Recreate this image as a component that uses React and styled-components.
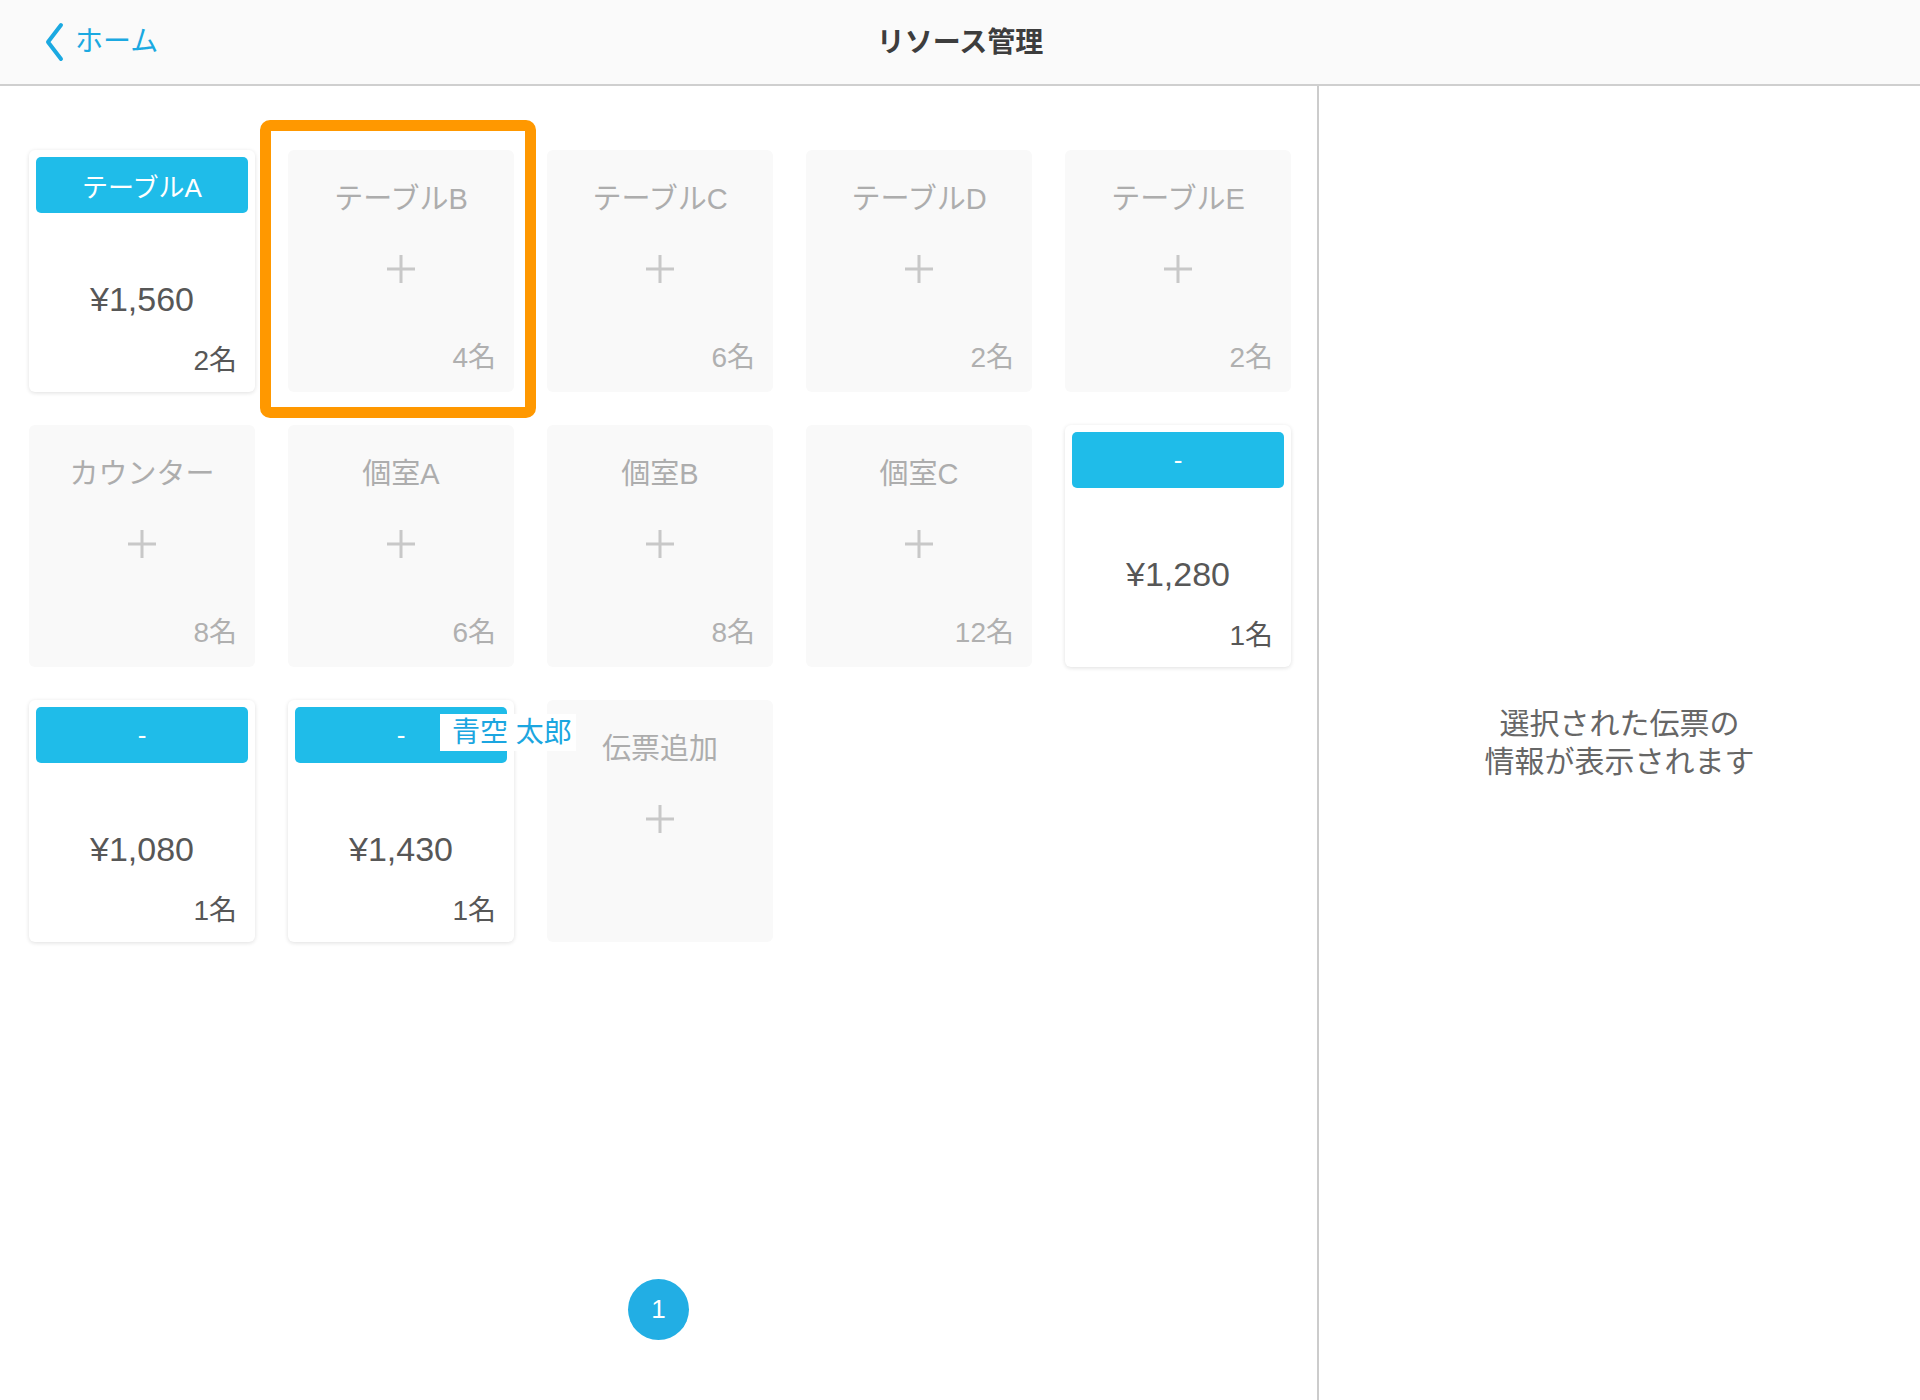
import React from 'react';
import styled, { createGlobalStyle } from 'styled-components';

const GlobalStyle = createGlobalStyle`
	body {
		margin: 0;
		background: #ffffff;
		font-family: "Liberation Sans", "Noto Sans CJK JP", sans-serif;
	}`;

const Page = styled.div`
	width: 1920px;
	min-height: 1400px;
	display: flex;
	flex-direction: column;`;

const Header = styled.header`
	height: 84px;
	background: #fafafa;
	border-bottom: 2px solid #cfcfcf;
	display: grid;
	grid-template-columns: 1fr auto 1fr;
	align-items: center;`;

const Back = styled.a`
	display: flex;
	align-items: center;
	gap: 10px;
	padding-left: 43px;
	color: #1ba9e1;
	font-size: 28px;
	line-height: 1;
	text-decoration: none;`;

const Title = styled.h1`
	margin: 0 0 5px;
	font-size: 28px;
	font-weight: 700;
	color: #3d3d3d;`;

const Main = styled.main`
	flex: 1;
	display: flex;`;

const LeftPanel = styled.section`
	width: 1317px;
	border-right: 2px solid #cccccc;
	display: flex;
	flex-direction: column;`;

const Grid = styled.div`
	display: grid;
	grid-template-columns: repeat(5, 226px);
	grid-auto-rows: 242px;
	gap: 33px;
	padding: 64px 29px 0;`;

const Slot = styled.div`
	position: relative;`;

const Card = styled.div`
	height: 100%;
	box-sizing: border-box;
	border-radius: 6px;
	display: flex;
	flex-direction: column;
	background: ${p => (p.$active ? '#ffffff' : '#f9f9f9')};
	box-shadow: ${p => (p.$active ? '0 1px 4px rgba(0, 0, 0, 0.13)' : 'none')};
	padding: ${p => (p.$active ? '7px 7px 0' : '0')};`;

const CardHead = styled.div`
	height: 56px;
	border-radius: 5px;
	background: #1fbce9;
	color: #ffffff;
	font-size: 26px;
	display: flex;
	align-items: center;
	justify-content: center;`;

const Price = styled.div`
	margin-top: 66px;
	line-height: 40px;
	font-size: 34px;
	color: #575757;
	text-align: center;`;

const Count = styled.div`
	margin-top: ${p => p.$top}px;
	padding-right: ${p => (p.$active ? '11px' : '18px')};
	line-height: 32px;
	font-size: 28px;
	text-align: right;
	color: ${p => (p.$active ? '#575757' : '#b0b0b0')};`;

const Name = styled.div`
	margin-top: 29px;
	line-height: 40px;
	font-size: 29px;
	color: #adadad;
	text-align: center;`;

const PlusWrap = styled.div`
	margin-top: 34px;
	height: 32px;
	display: flex;
	justify-content: center;`;

const Highlight = styled.div`
	position: absolute;
	top: -30px;
	left: -28px;
	right: -22px;
	bottom: -26px;
	border: 11px solid #ff9800;
	border-radius: 10px;
	pointer-events: none;`;

const NameTag = styled.span`
	position: absolute;
	top: 14px;
	left: 152px;
	z-index: 2;
	height: 37px;
	padding: 0 4px 0 12px;
	background: #ffffff;
	color: #1ba6e0;
	font-size: 28px;
	line-height: 37px;
	white-space: nowrap;`;

const Pager = styled.div`
	margin-top: auto;
	margin-bottom: 60px;
	display: flex;
	justify-content: center;`;

const PageDot = styled.div`
	width: 61px;
	height: 61px;
	border-radius: 50%;
	background: #22aee4;
	color: #ffffff;
	font-size: 26px;
	display: flex;
	align-items: center;
	justify-content: center;`;

const RightPanel = styled.aside`
	flex: 1;
	display: flex;
	align-items: center;
	justify-content: center;
	text-align: center;
	color: #666666;
	font-size: 30px;
	line-height: 38px;`;

const Plus = () => (
	<svg width="32" height="32" viewBox="0 0 32 32">
		<path d="M16 2v28M2 16h28" stroke="#c8c8c8" strokeWidth="3" />
	</svg>
);

const Chevron = () => (
	<svg width="22" height="40" viewBox="0 0 22 40">
		<path d="M18 3L5 20l13 17" fill="none" stroke="#1ba9e1" strokeWidth="4" strokeLinecap="round" strokeLinejoin="round" />
	</svg>
);

const tables = [
	{ name: 'テーブルA', price: '¥1,560', count: '2名' },
	{ name: 'テーブルB', count: '4名', highlight: true },
	{ name: 'テーブルC', count: '6名' },
	{ name: 'テーブルD', count: '2名' },
	{ name: 'テーブルE', count: '2名' },
	{ name: 'カウンター', count: '8名' },
	{ name: '個室A', count: '6名' },
	{ name: '個室B', count: '8名' },
	{ name: '個室C', count: '12名' },
	{ name: '-', price: '¥1,280', count: '1名' },
	{ name: '-', price: '¥1,080', count: '1名' },
	{ name: '-', price: '¥1,430', count: '1名', tag: '青空 太郎' },
	{ name: '伝票追加' },
];

const TableCard = ({ item }) => {
	if (item.price) {
		return (
			<Card $active>
				<CardHead>{item.name}</CardHead>
				<Price>{item.price}</Price>
				<Count $active $top={26}>{item.count}</Count>
			</Card>
		);
	}
	return (
		<Card>
			<Name>{item.name}</Name>
			<PlusWrap><Plus /></PlusWrap>
			{item.count && <Count $top={57}>{item.count}</Count>}
		</Card>
	);
};

const App = () => {
	return (
		<Page>
			<GlobalStyle />
			<Header>
				<Back href="#">
					<Chevron />
					ホーム
				</Back>
				<Title>リソース管理</Title>
				<div />
			</Header>
			<Main>
				<LeftPanel>
					<Grid>
						{tables.map((t, i) => (
							<Slot key={i}>
								<TableCard item={t} />
								{t.highlight && <Highlight />}
								{t.tag && <NameTag>{t.tag}</NameTag>}
							</Slot>
						))}
					</Grid>
					<Pager>
						<PageDot>1</PageDot>
					</Pager>
				</LeftPanel>
				<RightPanel>
					選択された伝票の<br />情報が表示されます
				</RightPanel>
			</Main>
		</Page>
	);
};

export default App;
